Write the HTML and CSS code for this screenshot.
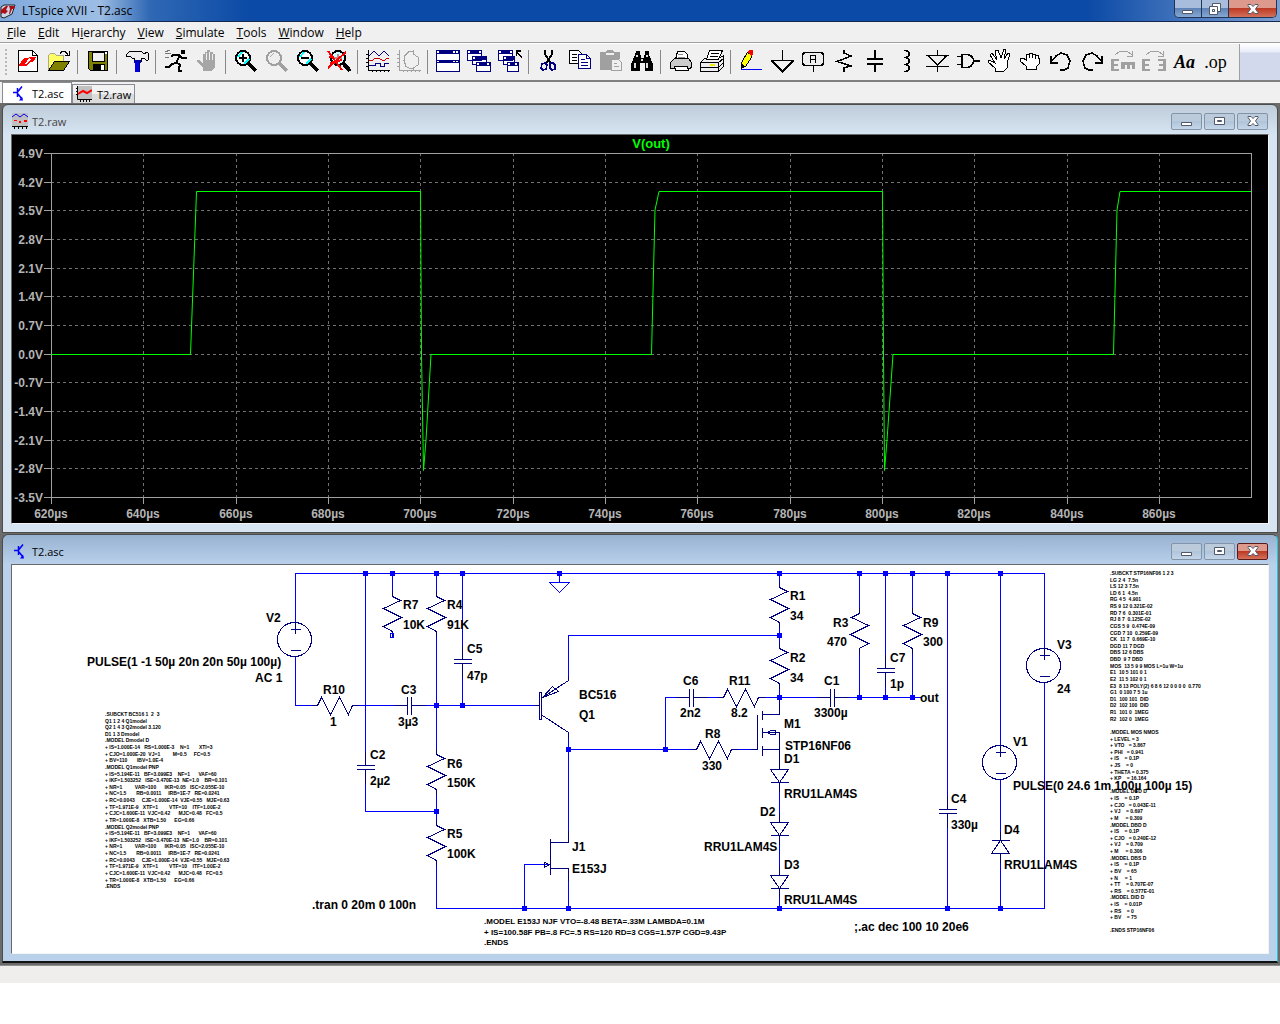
FILE: index.html
```
<!DOCTYPE html>
<html lang="en">
<head>
  <meta charset="UTF-8">
  <meta name="viewport" content="width=device-width, initial-scale=1.0">
  <title>LTspice XVII - T2.asc</title>
  <link rel="stylesheet" href="styles.css">
</head>
<body>

  <header class="title-bar">
    <svg class="app-icon" viewBox="0 0 16 16"><path d="M1 4l3-2h11l-3 9-8 4-3-1z" fill="#c9d6e6" stroke="#222"/><path d="M1 7l5-4h2L6 7l2 1-3 3-2-1-2 1zM9 3h6l-1 3h-2l-2 5H9l1-5z" fill="#b00c14"/></svg>
    <h1>LTspice XVII - T2.asc</h1>
    <div class="caption-buttons">
      <button class="caption" aria-label="Minimize"><svg viewBox="0 0 14 14"><path class="glyph" d="M1.500 8.500h10v3h-10z"/></svg></button>
      <button class="caption" aria-label="Restore"><svg viewBox="0 0 14 14"><path class="glyph" d="M4.500 1.500h8v8h-8z"/><path class="glyph" fill-rule="evenodd" d="M1.500 4.500h8v8h-8zM4.500 7.500h2v2h-2z"/></svg></button>
      <button class="caption close" aria-label="Close"><svg viewBox="0 0 14 14"><path class="glyph" d="M2 2.500h3l2 2 2-2h3v1L9.500 7l2.500 3.500v1H9l-2-2-2 2H2v-1L4.500 7 2 3.500z"/></svg></button>
    </div>
  </header>

  <nav class="menu-bar">
    <button><u>F</u>ile</button>
    <button><u>E</u>dit</button>
    <button>H<u>i</u>erarchy</button>
    <button><u>V</u>iew</button>
    <button><u>S</u>imulate</button>
    <button><u>T</u>ools</button>
    <button><u>W</u>indow</button>
    <button><u>H</u>elp</button>
  </nav>

  <div class="toolbar-row">
    <div class="toolbar" role="toolbar" aria-label="Main">
      <span class="grip"></span>
      <button aria-label="New Schematic"><svg viewBox="0 0 24 24"><path d="M2.500 1.500h14l5 5v16h-19z" fill="#fff" stroke="#000"/><path d="M16.500 1.500v5h5" fill="none" stroke="#000"/><path d="M3 16l5-7h5l-2 3-3 3h4l-3 2H3zM13 8h7l-2 4-3 1-5 4 1-3 4-3z" fill="#f00"/></svg></button>
      <button aria-label="Open"><svg viewBox="0 0 24 24"><path d="M1.500 21V6.500l2-2h4l2 2h7v5" fill="#ff6" stroke="#aa8"/><path d="M1.500 21.500l6-9h15l-6 9z" fill="#808000" stroke="#000"/><path d="M13 4.500l2-2h3l3 3M22.500 2v4.500H18" fill="none" stroke="#000"/></svg></button>
      <span class="separator"></span>
      <button aria-label="Save"><svg viewBox="0 0 24 24"><path d="M2.500 2.500h19v19h-17l-2-2z" fill="#808000" stroke="#000"/><path d="M6 3h12v9H6z" fill="#efefef" stroke="#000"/><path d="M7 15h12v7H7z"/><path d="M15 16h3v5h-3zM19 3h2v2h-2z" fill="#fff"/></svg></button>
      <span class="separator"></span>
      <button aria-label="Control Panel"><svg viewBox="0 0 24 24"><path d="M1 6l4-4h11l3 3 3-2 1 1v7l-1 1-3-3h-3v3H9V9H7L5 7 1 8z" fill="#eee" stroke="#000"/><path d="M9 11h7v3H9z" fill="#00a"/><path d="M10 13h5v10h-5z" fill="#0000e8"/><path d="M14 13h1v10h-1z" fill="#007"/></svg></button>
      <span class="separator"></span>
      <button aria-label="Run"><svg viewBox="0 0 24 24"><path d="M17 1h4v4h-4z"/><path d="M7 8l2-2h6l3 3h5M16 6l-4 8-4 1-3 3H1M12 13l4 3-1 3v3h3" fill="none" stroke="#000" stroke-width="2"/><path d="M1 3l5-2M1 5l6-1M1 9l4-1" stroke="#777"/></svg></button>
      <button aria-label="Halt" disabled><svg viewBox="0 0 24 24"><path d="M8 22v-3l-6-6v-2h2l4 3V5h2V3h2V1h3v2h3v2h2v13l-3 4z" fill="#a6a6a6"/><path d="M11.500 4v7M14.500 3v8M17.500 5v6" stroke="#efefef"/></svg></button>
      <span class="separator"></span>
      <button aria-label="Zoom In"><svg viewBox="0 0 24 24"><circle cx="9" cy="9" r="7" fill="#fff" stroke="#000" stroke-width="2"/><path d="M4 8l4-5M10 15l5-5" stroke="#0ff" stroke-width="2"/><path d="M9 5v8M5 9h8" stroke="#000" stroke-width="2"/><path d="M14 14l8 8" stroke="#000" stroke-width="4"/></svg></button>
      <button aria-label="Pan" disabled><svg viewBox="0 0 24 24"><circle cx="9" cy="9" r="7" fill="#eee" stroke="#a0a0a0" stroke-width="2"/><path d="M5 8l4-4" stroke="#aaa"/><path d="M14 14l8 8" stroke="#a0a0a0" stroke-width="4"/></svg></button>
      <button aria-label="Zoom Out"><svg viewBox="0 0 24 24"><circle cx="9" cy="9" r="7" fill="#fff" stroke="#000" stroke-width="2"/><path d="M4 8l4-5M10 15l5-5" stroke="#0ff" stroke-width="2"/><path d="M5 9h8" stroke="#000" stroke-width="2"/><path d="M14 14l8 8" stroke="#000" stroke-width="4"/></svg></button>
      <button aria-label="Zoom Full"><svg viewBox="0 0 24 24"><circle cx="11" cy="9" r="7" fill="#cff" stroke="#000" stroke-width="2"/><path d="M7 9h8M11 5v8" stroke="#c88" stroke-width="2"/><path d="M16 14l7 8" stroke="#000" stroke-width="4"/><path d="M1 2l14 19M19 3L1 19M2 8h5M3 14l12-3" fill="none" stroke="#f00" stroke-width="2"/></svg></button>
      <span class="separator"></span>
      <button aria-label="Plot"><svg viewBox="0 0 24 24"><path d="M2.500 1v20.500H24M0 5.500h2M0 9.500h2M0 13.500h2M0 17.500h2M6.500 21v2M10.500 21v2M14.500 21v2M18.500 21v2M22.500 21v2" fill="none" stroke="#000"/><path d="M3 7l5-5 5 5 5-5 5 5" fill="none" stroke="#000080"/><path d="M3 11h4l2-2h3l4 2h3l2-2h2" fill="none" stroke="#d00000"/><path d="M3 16.500h6v-2h5v3h4v-3h5" fill="none" stroke="#000080"/></svg></button>
      <button aria-label="FFT" disabled><svg viewBox="0 0 24 24"><path d="M2.500 1v20.500H24M0 5.500h2M0 9.500h2M0 13.500h2M0 17.500h2M6.500 21v2M10.500 21v2M14.500 21v2M18.500 21v2M22.500 21v2M16 2.500h-4l-4 4-1 5 2 6 4 2h4M16 1v4l5 3 1 4-1 4-5 3v3" fill="none" stroke="#a0a0a0"/></svg></button>
      <span class="separator"></span>
      <button aria-label="Tile"><svg viewBox="0 0 24 24"><path d="M.5 1.500h23v10H.5zM.5 11.500h23v11H.5z" fill="#fff" stroke="#000080"/><path d="M0 1h24v4H0zM0 11h24v3H0z" fill="#000080"/><path d="M1 2h2v2H1zM17 2h2v2h-2zM20 2h2v2h-2zM1 12h2v1H1zM17 12h2v1h-2zM20 12h2v1h-2z" fill="#fff"/></svg></button>
      <button aria-label="Cascade"><svg viewBox="0 0 24 24"><path d="M.5 1.500h14v10H.5zM5.500 7.500h14v8h-14zM9.500 13.500h14v9h-14z" fill="#fff" stroke="#000080"/><path d="M0 1h15v4H0zM5 7h15v4H5zM9 13h15v4H9z" fill="#000080"/><path d="M1 2h2v2H1zM12 2h2v2h-2zM6 8h2v2H6zM10 14h2v2h-2zM20 14h2v2h-2z" fill="#fff"/></svg></button>
      <button aria-label="Close All"><svg viewBox="0 0 24 24"><path d="M.5 1.500h14v10H.5zM5.500 7.500h11v8h-11zM9.500 13.500h11v9h-11z" fill="#fff" stroke="#000080"/><path d="M0 1h15v4H0zM5 7h12v4H5zM9 13h12v4H9z" fill="#000080"/><path d="M1 2h2v2H1zM12 2h2v2h-2zM6 8h2v2H6zM10 14h2v2h-2zM17 14h2v2h-2z" fill="#fff"/><path d="M18 1h5v2h-3l4 5-1 1-4-5v3h-1z"/></svg></button>
      <span class="separator"></span>
      <button aria-label="Cut"><svg viewBox="0 0 24 24"><path d="M8 1v4l6 10M15 1v4L9 15" fill="none" stroke="#000" stroke-width="2"/><path d="M8 14l-3 1-1 4 2 2 3-1 1-4zM13 14v5l2 2 3-1v-4l-2-2z" fill="none" stroke="#000080" stroke-width="1.500"/></svg></button>
      <button aria-label="Copy"><svg viewBox="0 0 24 24"><path d="M1.500 1.500h9l3 3v10h-12z" fill="#fff" stroke="#000"/><path d="M4 5.500h5M4 8.500h5M4 11.500h5" stroke="#000"/><path d="M10.500 5.500h8l4 4v10h-12z" fill="#fff" stroke="#000080"/><path d="M18.500 5.500v4h4" fill="none" stroke="#000080"/><path d="M13 10.500h4M13 13.500h7M13 16.500h7" stroke="#000080"/></svg></button>
      <button aria-label="Paste" disabled><svg viewBox="0 0 24 24"><path d="M1 3h6l1-2h6l1 2h6v7h-8v11H1z" fill="#a0a0a0"/><path d="M7 4h8v2H7z" fill="#efefef"/><path d="M12.500 10.500h7l3 3v8h-10z" fill="#efefef" stroke="#a0a0a0"/><path d="M15 14.500h3M15 17.500h5" stroke="#a0a0a0"/></svg></button>
      <button aria-label="Find"><svg viewBox="0 0 24 24"><path d="M6 2h4v4h1v3h3V6h1V2h4v4l4 9v7h-8v-8h-5v8H1v-7l4-9z"/><path d="M6 6h2v2H6zM16 6h2v2h-2zM4 14h2v5H4zM16 14h2v5h-2zM11 10h2v2h-2z" fill="#ddd"/></svg></button>
      <span class="separator"></span>
      <button aria-label="Print"><svg viewBox="0 0 24 24"><path d="M6.500 10.500l2-8h7l3 3v5z" fill="#fff" stroke="#000"/><path d="M1.500 13.500l4-4h14l3 4v5l-2 1h-19z" fill="#ccc" stroke="#000"/><path d="M5.500 17.500h13l1 4h-13z" fill="#fff" stroke="#000"/><path d="M9 5.500h5M9 8.500h7" stroke="#888"/></svg></button>
      <button aria-label="Print Setup"><svg viewBox="0 0 24 24"><path d="M6.500 10.500l3-9h13l-4 9z" fill="#fff" stroke="#000"/><path d="M11 4.500h8M10 7.500h8" stroke="#000"/><path d="M.5 13.500l4-4h14l5-3v11l-5 5H.5z" fill="#eee" stroke="#000"/><path d="M6.500 10.500l3-9h13l-4 9z" fill="#fff" stroke="#000"/><path d="M11 4.500h8M10 7.500h8" stroke="#000"/><path d="M.5 13.500h18v9M18.500 13.500l5-4M.5 18.500h18l5-5" fill="none" stroke="#000"/><path d="M10 15h5v2h-5z" fill="#ee0"/></svg></button>
      <span class="separator"></span>
      <button aria-label="Wire"><svg viewBox="0 0 24 24"><path d="M2.500 18.500v-5l6-10 4 2v3l-6 9z" fill="#ff0" stroke="#000"/><path d="M8 3l2-2h4v4l-2 2z" fill="#f00"/><path d="M2 14l4 3-4 3z"/><path d="M2 20.500h21" stroke="#00f"/></svg></button>
      <button aria-label="Ground"><svg viewBox="0 0 24 24"><path d="M12.500 1v10M1 11.500h23M2 12l10.500 10.500L23 12" fill="none" stroke="#000" stroke-width="1.500"/></svg></button>
      <button aria-label="Label Net"><svg viewBox="0 0 24 24"><rect x="1.500" y="3.500" width="21" height="13" rx="3" fill="#eee" stroke="#000" stroke-width="1.500"/><path d="M9.500 14V6.500h5V14M9 10.500h5M12.500 17v6" fill="none" stroke="#000"/></svg></button>
      <button aria-label="Resistor"><svg viewBox="0 0 24 24"><path d="M12 1v3l7 3-14 5.500L19 17l-7 2v4" fill="none" stroke="#000" stroke-width="1.500"/></svg></button>
      <button aria-label="Capacitor"><svg viewBox="0 0 24 24"><path d="M12 1v9M12 15v8M4 10h16M4 15h16" stroke="#000" stroke-width="2"/></svg></button>
      <button aria-label="Inductor"><svg viewBox="0 0 24 24"><path d="M10 1.500c7 0 7 7 0 7 7 0 7 7 0 7 7 0 7 7 0 7" fill="none" stroke="#000" stroke-width="1.500"/></svg></button>
      <button aria-label="Diode"><svg viewBox="0 0 24 24"><path d="M12.500 1v5M1 6.500h23M4 7l8.500 9L21 7M1 17.500h23M12.500 17v6" fill="none" stroke="#000" stroke-width="1.500"/></svg></button>
      <button aria-label="Component"><svg viewBox="0 0 24 24"><path d="M6 5.500h5c4 0 6 3 7 6.500-1 3-3 6.500-7 6.500H6zM1 7.500h5M1 15.500h5M18 12h6" fill="none" stroke="#000" stroke-width="1.500"/></svg></button>
      <button aria-label="Move"><svg viewBox="0 0 24 24"><path d="M8 22v-3l-7-6 1-2 6 3-5-8 2-2 5 7-2-9 3-1 3 8 3-9 2 1-2 9 4-6 2 1-3 9v5l-3 3z" fill="#fff" stroke="#000"/></svg></button>
      <button aria-label="Drag"><svg viewBox="0 0 24 24"><path d="M8 20v-3l-6-5V9h3l3 2V5h3V4h3v1h3v1h3v3h1v6l-3 3v2z" fill="#fff" stroke="#000"/><path d="M11.500 6v3M14.500 6v3M17.500 7v3" stroke="#000"/></svg></button>
      <button aria-label="Undo"><svg viewBox="0 0 24 24"><path d="M2 7v7h7M3 12l4-5 5-3 6 2 3 6-2 7-4 2h-4" fill="none" stroke="#000" stroke-width="1.500"/></svg></button>
      <button aria-label="Redo"><svg viewBox="0 0 24 24"><path d="M22 7v7h-7M21 12l-4-5-5-3-6 2-3 6 2 7 4 2h4" fill="none" stroke="#000" stroke-width="1.500"/></svg></button>
      <button aria-label="Rotate" disabled><svg viewBox="0 0 24 24"><path d="M4 6l5-4h7l5 4M21 2v5h-5" fill="none" stroke="#a0a0a0"/><path d="M0 10h8v2H3v3h4v2H3v3h5v2H0zM10 13h14v7h-3v-4h-2v4h-3v-4h-2v4h-4z" fill="#a0a0a0"/></svg></button>
      <button aria-label="Mirror" disabled><svg viewBox="0 0 24 24"><path d="M4 6l5-4h7l5 4M21 2v5h-5" fill="none" stroke="#a0a0a0"/><path d="M0 10h8v2H3v3h4v2H3v3h5v2H0zM24 10h-8v2h5v3h-4v2h4v3h-5v2h8z" fill="#a0a0a0"/></svg></button>
      <button aria-label="Text" class="text-tool">Aa</button>
      <button aria-label="SPICE Directive" class="op-tool">.op</button>
    </div>
  </div>

  <div class="tabs" role="tablist">
    <button class="tab active" role="tab" aria-selected="true"><svg viewBox="0 0 16 16"><path d="M2 7.500h4M6.500 3v9M7 6.500l4-5M7 9l4 5" fill="none" stroke="#00f" stroke-width="1.500"/><path d="M12 15.500H8l3-4z" fill="#00f"/></svg>T2.asc</button>
    <button class="tab" role="tab" aria-selected="false"><svg viewBox="0 0 16 16"><path d="M2 0h14v13H2z" fill="#c0c0c0"/><path d="M1.500 0v13.500H16M0 2.500h1M0 5.500h1M0 8.500h1M4.500 13v3M7.500 13v3M10.500 13v3M13.500 13v3" fill="none" stroke="#000"/><path d="M2 8l5-3 4 2 5-3" fill="none" stroke="#f00" stroke-width="2"/></svg>T2.raw</button>
  </div>

  <main class="workspace">
    <section class="window">
      <div class="window-title">
        <svg viewBox="0 0 16 16"><path d="M0 0h16v14H0z" fill="#c0c0c0"/><path d="M0 4l4-3 4 3 4-3 4 3" fill="none" stroke="#00f"/><path d="M2 7h3v1H2zM7 8h2v2H7zM12 7h3v2h-3z" fill="#f00"/><path d="M0 13.500h16M2.500 14v2M6.500 14v2M10.500 14v2M14.500 14v2" stroke="#000"/></svg>
        <h2>T2.raw</h2>
        <button class="caption" aria-label="Minimize"><svg viewBox="0 0 14 14"><path class="glyph" d="M1.500 8.500h10v3h-10z"/></svg></button>
        <button class="caption" aria-label="Maximize"><svg viewBox="0 0 14 14"><path class="glyph" fill-rule="evenodd" d="M1.500 3.500h10v7h-10zM4.500 6.500h4v1h-4z"/></svg></button>
        <button class="caption" aria-label="Close"><svg viewBox="0 0 14 14"><path class="glyph" d="M2 2.500h3l2 2 2-2h3v1L9.500 7l2.500 3.500v1H9l-2-2-2 2H2v-1L4.500 7 2 3.500z"/></svg></button>
      </div>
      <svg class="plot" viewBox="12 135 1256 388" role="img" aria-label="V(out) waveform">
        <g id="grid"></g>
        <rect class="plot-frame" x="51.500" y="153.500" width="1200" height="344"/>
        <path class="trace" d="M51 354.500H190.500L196.500 191.500H420.500L421.500 354L423.500 470.500L426 440L431 354.500H651.500L655 210L659 191.500H882.500L883.500 354L884.500 470.500L887 440L893 354.500H1113.500L1117 210L1120 191.500H1251"/>
        <text class="trace-name" x="651" y="148">V(out)</text>
      </svg>
    </section>

    <section class="window focused">
      <div class="window-title">
        <svg viewBox="0 0 16 16"><path d="M2 7.500h4M6.500 3v9M7 6.500l4-5M7 9l4 5" fill="none" stroke="#00f" stroke-width="1.500"/><path d="M12 15.500H8l3-4z" fill="#00f"/></svg>
        <h2>T2.asc</h2>
        <button class="caption" aria-label="Minimize"><svg viewBox="0 0 14 14"><path class="glyph" d="M1.500 8.500h10v3h-10z"/></svg></button>
        <button class="caption" aria-label="Maximize"><svg viewBox="0 0 14 14"><path class="glyph" fill-rule="evenodd" d="M1.500 3.500h10v7h-10zM4.500 6.500h4v1h-4z"/></svg></button>
        <button class="caption close" aria-label="Close"><svg viewBox="0 0 14 14"><path class="glyph" d="M2 2.500h3l2 2 2-2h3v1L9.500 7l2.500 3.500v1H9l-2-2-2 2H2v-1L4.500 7 2 3.500z"/></svg></button>
      </div>
      <svg class="schematic" viewBox="12 565 1256 388" role="img" aria-label="T2 schematic">
        <defs>
          <path id="res" d="M0 -6V0L8 4L-9 12L9 21L-9 30L0 35V40"/>
          <path id="res-h" d="M-6 0H0L4 -8L13 9L22 -8L31 9L35 0H41"/>
          <path id="cap" d="M-9 0H9M-9 4H9M0 -14V0M0 4V18"/>
          <path id="cap-h" d="M0 -9V9M4 -9V9M-14 0H0M4 0H18"/>
          <path id="diode" d="M-9 0H9L0 13ZM-9 13H9M0 -9V0M0 13V22"/>
          <g id="source"><circle cx="-1" r="17"/><path d="M-5 -10H5M0 -17V-6M-5 11H5"/></g>
        </defs>

        <g transform="translate(.5 .5)">
          <!-- Wires -->
          <path class="wire" d="M295 622V573H1044V648M295 656V705H317M353 705H407M411 705H539M365 573V765M365 769V811H436
            M392 573V596M436 573V596M436 631V754M436 790V825M436 860V908H1044V682M462 573V659M462 663V705
            M568 680V635H779M779 573V587M779 622V648M779 683V697M568 732V842M568 868V908M550 864H524V908
            M568 749H696M731 749H757M665 749V697H689M693 697H723M757 697H830M834 697H920
            M779 782V822M779 835V875M779 888V908M859 573V613M859 648V697M885 573V668M885 672V697
            M912 573V613M912 648V697M947 573V809M947 813V908M1000 573V745M1000 779V840M1000 853V908
            M559 573V582H549L559 592L569 582H559"/>

          <!-- Parts -->
          <g class="part">
            <use href="#source" x="295" y="639"/>
            <use href="#source" x="1000" y="762"/>
            <use href="#source" x="1044" y="665"/>
            <use href="#res" x="392" y="596"/>
            <use href="#res" x="436" y="596"/>
            <use href="#res" x="436" y="754"/>
            <use href="#res" x="436" y="825"/>
            <use href="#res" x="779" y="587"/>
            <use href="#res" x="779" y="648"/>
            <use href="#res" x="912" y="613"/>
            <use href="#res" transform="translate(859 613) scale(-1 1)"/>
            <use href="#res-h" x="317" y="705"/>
            <use href="#res-h" x="723" y="697"/>
            <use href="#res-h" x="696" y="749"/>
            <use href="#cap" x="365" y="765"/>
            <use href="#cap" x="462" y="659"/>
            <use href="#cap" x="885" y="668"/>
            <use href="#cap" x="947" y="809"/>
            <use href="#cap-h" x="407" y="705"/>
            <use href="#cap-h" x="689" y="697"/>
            <use href="#cap-h" x="830" y="697"/>
            <use href="#diode" x="779" y="769"/>
            <use href="#diode" x="779" y="822"/>
            <use href="#diode" x="779" y="875"/>
            <use href="#diode" transform="translate(1000 853) scale(1 -1)"/>
            <!-- Q1 -->
            <path d="M539 692H541V719H539ZM534 705H539M568 675V680L542 697L552 686L558 691L542 697M542 715L568 732V738"/>
            <!-- J1 -->
            <path d="M550 838V874M568 830V842H550M550 868H568V880M544 862V867L549 864Z"/>
            <!-- M1 -->
            <path d="M757 714V749H750M762 710V719M762 727V737M762 745V755M779 697V714H762M762 749H779M762 732H779V769M766 732L771 730H775V734H771Z"/>
          </g>
          <rect class="pin" x="390" y="633" width="3" height="4"/>
          <g id="junctions"></g>
        </g>

        <g class="labels">
          <text x="266" y="622">V2</text>
          <text x="87" y="666">PULSE(1 -1 50µ 20n 20n 50µ 100µ)</text>
          <text x="255" y="682">AC 1</text>
          <text x="323" y="694">R10</text>
          <text x="330" y="726">1</text>
          <text x="401" y="694">C3</text>
          <text x="398" y="726">3µ3</text>
          <text x="370" y="759">C2</text>
          <text x="370" y="785">2µ2</text>
          <text x="403" y="609">R7</text>
          <text x="403" y="629">10K</text>
          <text x="447" y="609">R4</text>
          <text x="447" y="629">91K</text>
          <text x="467" y="653">C5</text>
          <text x="467" y="680">47p</text>
          <text x="579" y="699">BC516</text>
          <text x="579" y="719">Q1</text>
          <text x="447" y="768">R6</text>
          <text x="447" y="787">150K</text>
          <text x="447" y="838">R5</text>
          <text x="447" y="858">100K</text>
          <text x="572" y="851">J1</text>
          <text x="572" y="873">E153J</text>
          <text x="790" y="600">R1</text>
          <text x="790" y="620">34</text>
          <text x="790" y="662">R2</text>
          <text x="790" y="682">34</text>
          <text x="824" y="685">C1</text>
          <text x="814" y="717">3300µ</text>
          <text x="833" y="627">R3</text>
          <text x="827" y="646">470</text>
          <text x="923" y="627">R9</text>
          <text x="923" y="646">300</text>
          <text x="890" y="662">C7</text>
          <text x="890" y="688">1p</text>
          <text x="920" y="702">out</text>
          <text x="1057" y="649">V3</text>
          <text x="1057" y="693">24</text>
          <text x="683" y="685">C6</text>
          <text x="680" y="717">2n2</text>
          <text x="729" y="685">R11</text>
          <text x="731" y="717">8.2</text>
          <text x="705" y="738">R8</text>
          <text x="702" y="770">330</text>
          <text x="784" y="728">M1</text>
          <text x="785" y="750">STP16NF06</text>
          <text x="784" y="763">D1</text>
          <text x="784" y="798">RRU1LAM4S</text>
          <text x="760" y="816">D2</text>
          <text x="704" y="851">RRU1LAM4S</text>
          <text x="784" y="869">D3</text>
          <text x="784" y="904">RRU1LAM4S</text>
          <text x="951" y="803">C4</text>
          <text x="951" y="829">330µ</text>
          <text x="1013" y="746">V1</text>
          <text x="1013" y="790">PULSE(0 24.6 1m 100µ 100µ 15)</text>
          <text x="1004" y="834">D4</text>
          <text x="1004" y="869">RRU1LAM4S</text>
          <text x="312" y="909">.tran 0 20m 0 100n</text>
          <text x="854" y="931">;.ac dec 100 10 20e6</text>
        </g>

        <g class="model">
          <text x="484" y="924">.MODEL E153J NJF VTO=-8.48 BETA=.33M LAMBDA=0.1M</text>
          <text x="484" y="935">+ IS=100.58F PB=.8 FC=.5 RS=120 RD=3 CGS=1.57P CGD=9.43P</text>
          <text x="484" y="945">.ENDS</text>
        </g>
        <g id="netlists" class="netlist"></g>
      </svg>
    </section>
  </main>

  <footer class="status-bar"></footer>

  <script src="script.js"></script>
</body>
</html>
```
FILE: styles.css
```
/* Basic Reset */
* {
  margin: 0;
  padding: 0;
  box-sizing: border-box;
}

body {
  font-family: "Open Sans", "Noto Sans", sans-serif;
  font-size: 12px;
  color: #000;
  background: #fff;
}

button {
  font: inherit;
  color: inherit;
  background: none;
  border: none;
}

/* Title Bar */
.title-bar {
  display: flex;
  align-items: center;
  height: 22px;
  background: linear-gradient(90deg, #7fa9dc, #9dbde4 100px, #2f68b4 150px, #0b4aa6 250px, #0b4aa6 85%, #7c9fd2);
  border-bottom: 1px solid #14284f;
}

.app-icon {
  width: 16px;
  height: 16px;
  margin-right: 6px;
}

.title-bar h1 {
  flex: 1;
  font-size: 12px;
  font-weight: normal;
}

.caption-buttons {
  display: flex;
  align-self: flex-start;
  margin-right: 3px;
  border: 1px solid #1f3557;
  border-top: none;
  border-radius: 0 0 5px 5px;
  overflow: hidden;
}

.caption {
  display: flex;
  align-items: center;
  justify-content: center;
  width: 31px;
  height: 17px;
  background: linear-gradient(#bccbdb 50%, #b0c4da 50%, #c4d6e8);
  border: 1px solid #8494a8;
  border-radius: 2px;
}

.caption svg {
  width: 14px;
  height: 14px;
}

.glyph {
  fill: #fff;
  stroke: #50586a;
}

.caption-buttons .caption {
  width: 27px;
  background: linear-gradient(#a7bddb 50%, #5f83b6 50%, #86a8d2);
  border: none;
  border-right: 1px solid #1f3557;
  border-radius: 0;
}

.caption-buttons .close {
  width: 47px;
  border-right: none;
}

.caption-buttons .close,
.focused .close {
  background: linear-gradient(#dd9a8c 45%, #bd3a24 50%, #d4715a);
}

.focused .close {
  border-color: #5a1a1c;
}

/* Menu */
.menu-bar {
  display: flex;
  height: 21px;
  padding-left: 1px;
  background: #f0f0f0;
  border-bottom: 1px solid #a0a0a0;
}

.menu-bar button {
  padding: 0 6px;
}

/* Toolbar */
.toolbar-row {
  background: linear-gradient(#fff, #e8ecf8 8px, #d3d9ec 9px);
  border-top: 1px solid #fff;
  border-bottom: 2px solid #808080;
}

.toolbar {
  display: flex;
  align-items: center;
  width: fit-content;
  height: 36px;
  padding-right: 8px;
  background: #f0f0f0;
  border-right: 1px solid #a0a0a0;
}

.toolbar button {
  flex: none;
  width: 31px;
  height: 26px;
}

.toolbar svg {
  display: block;
  width: 24px;
  height: 24px;
  margin: 0 auto 2px;
  shape-rendering: crispEdges;
}

.grip {
  width: 2px;
  height: 26px;
  margin: 0 5px;
  background: repeating-linear-gradient(#b8b8b8 0 2px, transparent 2px 4px);
}

.separator {
  width: 1px;
  height: 24px;
  margin: 0 4px 0 3px;
  background: #888;
}

.toolbar .text-tool,
.toolbar .op-tool {
  font-family: "Liberation Serif", serif;
  font-size: 18px;
  line-height: 24px;
}

.toolbar .text-tool {
  font-weight: bold;
  font-style: italic;
}

/* Tabs */
.tabs {
  display: flex;
  align-items: flex-end;
  height: 21px;
  padding-left: 2px;
  background: #f0f0f0;
}

.tab {
  display: flex;
  align-items: center;
  gap: 5px;
  height: 19px;
  padding: 0 3px;
  font-size: 11px;
  background: linear-gradient(#f2f2f2 50%, #dcdcdc 50%);
  border: 1px solid #898c95;
  border-bottom: none;
}

.tab.active {
  height: 21px;
  padding: 0 7px 0 8px;
  background: #fff;
}

.tab svg {
  width: 16px;
  height: 16px;
}

/* Document Windows */
.workspace {
  display: flex;
  flex-direction: column;
  gap: 1px;
  padding: 1px 2px 2px;
  background: #6b6b6b;
}

.window {
  padding: 0 8px 8px;
  background: linear-gradient(#bfcddb, #d7e4f2 30px);
  border: 1px solid #4c4c4c;
  border-radius: 6px 6px 0 0;
}

.window.focused {
  padding-bottom: 7px;
  background: linear-gradient(#98b2d2, #b9d1ea 30px);
  border-right-color: #27c4d6;
  border-bottom: 2px solid #111;
}

.window-title {
  display: flex;
  align-items: center;
  gap: 2px;
  height: 29px;
  padding: 3px 1px 0;
}

.window-title > svg {
  width: 16px;
  height: 16px;
  margin-right: 2px;
}

.window-title h2 {
  flex: 1;
  font-size: 11px;
  font-weight: normal;
  color: #444;
}

.focused h2 {
  color: #000;
}

.plot,
.schematic {
  display: block;
  width: 100%;
  border: 1px solid #f4f4f4;
  border-top-color: #696969;
  border-left-color: #696969;
}

/* Waveform */
.plot {
  background: #000;
  font: bold 12px "Liberation Sans", Arial, sans-serif;
}

.plot-frame,
.tick {
  fill: none;
  stroke: #a0a0a0;
  shape-rendering: crispEdges;
}

.grid-line {
  stroke: #707070;
  stroke-dasharray: 3 3;
  shape-rendering: crispEdges;
}

.axis-label {
  fill: #b4b4b4;
}

.trace-name {
  font-size: 13px;
}

.axis-label.x,
.trace-name {
  text-anchor: middle;
}

.axis-label.y {
  text-anchor: end;
}

.trace {
  fill: none;
  stroke: #00ff00;
}

.trace-name {
  fill: #00ff00;
}

/* Schematic */
.schematic {
  background: #fff;
  font-family: "Liberation Sans", Arial, sans-serif;
  font-weight: bold;
}

.wire,
.pin {
  fill: none;
  stroke: #0000ff;
  shape-rendering: crispEdges;
}

.part {
  fill: none;
  stroke: #000080;
  shape-rendering: crispEdges;
}

.junction {
  fill: #0000ff;
}

.labels {
  font-size: 12px;
}

.model {
  font-size: 8px;
}

.netlist text {
  font-size: 5px;
  white-space: pre;
}

/* Status Bar */
.status-bar {
  height: 18px;
  background: #f0eded;
  border-top: 1px solid #909090;
}
```
FILE: script.js
```
const SVG_NS = "http://www.w3.org/2000/svg";

function add(parent, tag, attrs, text) {
  const el = document.createElementNS(SVG_NS, tag);
  for (const name in attrs) el.setAttribute(name, attrs[name]);
  if (text) el.textContent = text;
  parent.appendChild(el);
}

// Plot grid and axes
const grid = document.getElementById("grid");
const volts = ["4.9", "4.2", "3.5", "2.8", "2.1", "1.4", "0.7", "0.0", "-0.7", "-1.4", "-2.1", "-2.8", "-3.5"];

volts.forEach((v, i) => {
  const y = Math.round(153 + i * 344 / 12);
  add(grid, "path", { class: "grid-line", d: `M51 ${y + 0.5}H1251` });
  add(grid, "path", { class: "tick", d: `M44 ${y + 0.5}H51` });
  add(grid, "text", { class: "axis-label y", x: 43, y: y + 5 }, v + "V");
});

for (let i = 0; i < 13; i++) {
  const x = Math.round(51 + i * 92.333);
  add(grid, "path", { class: "grid-line", d: `M${x + 0.5} 153V497` });
  add(grid, "path", { class: "tick", d: `M${x + 0.5} 497V504` });
  add(grid, "text", { class: "axis-label x", x: x, y: 518 }, 620 + i * 20 + "µs");
}

// Wire junctions
const junctions = [
  [365, 573], [392, 573], [436, 573], [462, 573], [559, 573], [779, 573], [859, 573], [885, 573],
  [912, 573], [947, 573], [1000, 573], [436, 705], [462, 705], [436, 811], [568, 749], [665, 749],
  [779, 635], [779, 697], [859, 697], [885, 697], [912, 697],
  [524, 908], [568, 908], [779, 908], [947, 908], [1000, 908]
];

junctions.forEach(([x, y]) => {
  add(document.getElementById("junctions"), "rect", { class: "junction", x: x - 2.5, y: y - 2.5, width: 5, height: 5 });
});

// Subcircuit listings
const pnpModel = `+ IS=5.194E-11   BF=3.099E3    NF=1      VAF=60
+ IKF=1.503252   ISE=3.470E-13  NE=1.0    BR=0.101
+ NR=1         VAR=100      IKR=0.05   ISC=2.055E-10
+ NC=1.5       RB=0.0011     IRB=1E-7   RE=0.0241
+ RC=0.0043     CJE=1.000E-14  VJE=0.55   MJE=0.63
+ TF=1.971E-9   XTF=1        VTF=10    ITF=1.00E-2
+ CJC=1.600E-11  VJC=0.42      MJC=0.48   FC=0.5
+ TR=1.000E-8   XTB=1.50      EG=0.66`;

const bc516 = `.SUBCKT BC516 1  2  3
Q1 1 2 4 Q1model
Q2 1 4 3 Q2model 3.120
D1 1 3 Dmodel
.MODEL Dmodel D
+ IS=1.000E-14   RS=1.000E-3    N=1       XTI=3
+ CJO=1.000E-20  VJ=1         M=0.5     FC=0.5
+ BV=110       IBV=1.0E-4
.MODEL Q1model PNP
${pnpModel}
.MODEL Q2model PNP
${pnpModel}
.ENDS`;

const stp16nf06 = `.SUBCKT STP16NF06 1 2 3
LG 2 4  7.5n
LS 12 3 7.5n
LD 6 1  4.5n
RG 4 5  4.901
RS 9 12 0.321E-02
RD 7 6  0.301E-01
RJ 8 7  0.125E-02
CGS 5 9  0.474E-09
CGD 7 10  0.259E-09
CK  11 7  0.669E-10
DGD 11 7 DGD
DBS 12 6 DBS
DBD  9 7 DBD
MOS  13 5 9 9 MOS L=1u W=1u
E1  10 5 101 0 1
E2  11 5 102 0 1
E3  8 13 POLY(2) 6 8 6 12 0 0 0 0  0.770
G1  0 100 7 5 1u
D1  100 101  DID
D2  102 100  DID
R1  101 0  1MEG
R2  102 0  1MEG

.MODEL MOS NMOS
+ LEVEL = 3
+ VTO   = 3.867
+ PHI   = 0.941
+ IS    = 0.1P
+ JS    = 0
+ THETA = 0.375
+ KP    = 16.164

.MODEL DGD D
+ IS    = 0.1P
+ CJO   = 0.043E-11
+ VJ    = 0.697
+ M     = 0.309
.MODEL DBD D
+ IS    = 0.1P
+ CJO   = 0.240E-12
+ VJ    = 0.709
+ M     = 0.306
.MODEL DBS D
+ IS    = 0.1P
+ BV    = 65
+ N     = 1
+ TT    = 0.707E-07
+ RS    = 0.577E-01
.MODEL DID D
+ IS    = 0.01P
+ RS    = 0
+ BV    = 75

.ENDS STP16NF06`;

function addListing(source, x, top) {
  source.split("\n").forEach((line, i) => {
    add(document.getElementById("netlists"), "text", { x: x, y: top + Math.round(i * 6.62) }, line);
  });
}

addListing(bc516, 105, 716);
addListing(stp16nf06, 1110, 575);
```
